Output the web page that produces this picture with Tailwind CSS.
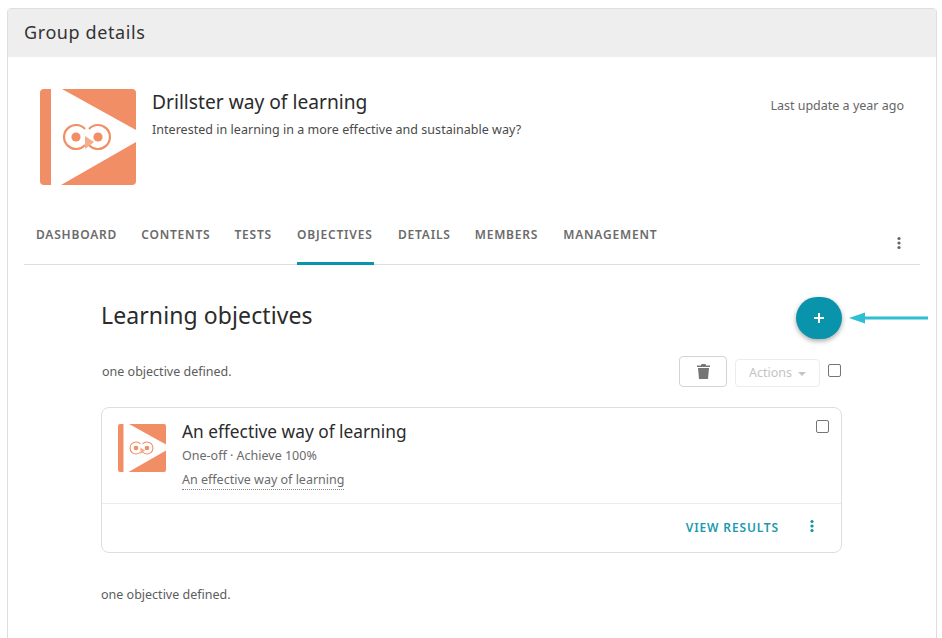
<!DOCTYPE html>
<html>
<head>
<meta charset="utf-8">
<title>Group details</title>
<script src="https://cdn.jsdelivr.net/npm/@tailwindcss/browser@4"></script>
</head>
<body class="bg-white font-['Noto_Sans',sans-serif] text-[#212121] overflow-hidden h-[638px]">
<svg class="hidden">
  <symbol id="logo" viewBox="0 0 96 96">
    <rect width="96" height="96" rx="4" fill="#f28e66"/>
    <path d="M11 0H22L96 41V53L21 96H11Z" fill="#fff"/>
    <path d="M45 40A12 12 0 1 0 45 56" fill="none" stroke="#f28e66" stroke-width="2.2"/>
    <path d="M49 40A12 12 0 1 1 49 56" fill="none" stroke="#f28e66" stroke-width="2.2"/>
    <circle cx="36" cy="48" r="4.6" fill="#f28e66"/>
    <circle cx="58" cy="48" r="4.6" fill="#f28e66"/>
    <path d="M45 47L54 53L45 60Z" fill="#f6ab8c"/>
  </symbol>
</svg>

<div class="relative ml-[7px] mr-[5px] mt-2 h-[700px] rounded-t-[4px] border border-[#dedede]">
  <div class="h-[48px] bg-[#eeeeee] pl-4 pt-[10px] text-[18px] leading-[27px] tracking-[0.6px] text-[#333]">Group details</div>

  <div class="flex pl-8 pr-8 pt-8">
    <svg class="h-24 w-24 shrink-0"><use href="#logo"/></svg>
    <div class="ml-4 flex-1">
      <div class="text-[19.2px] leading-7 -mt-[1px] text-[#2b2b2b]">Drillster way of learning</div>
      <div class="mt-1 text-[12.5px] leading-5 tracking-[0.03px] text-[#4a4a4a]">Interested in learning in a more effective and sustainable way?</div>
    </div>
    <div class="mt-[7px] text-[12.5px] leading-5 text-[#666]">Last update a year ago</div>
  </div>

  <div class="mx-4 mt-[19px] flex h-[61px] items-stretch border-b border-[#dedede] pl-3 text-[12px] font-semibold tracking-[0.8px] text-[#6b6b6b]">
    <a class="pt-[21px] leading-5">DASHBOARD</a>
    <a class="ml-6 pt-[21px] leading-5">CONTENTS</a>
    <a class="ml-6 pt-[21px] leading-5">TESTS</a>
    <a class="ml-[25px] -mb-px w-[77px] border-b-[3px] border-[#0a94ab] pt-[21px] leading-5">OBJECTIVES</a>
    <a class="ml-6 pt-[21px] leading-5">DETAILS</a>
    <a class="ml-6 pt-[21px] leading-5">MEMBERS</a>
    <a class="ml-[25px] pt-[21px] leading-5">MANAGEMENT</a>
    <svg class="ml-auto mr-[19px] mt-[32px] h-[14px] w-[4px]" viewBox="0 0 4 14" fill="#666"><circle cx="2" cy="2.5" r="1.6"/><circle cx="2" cy="7" r="1.6"/><circle cx="2" cy="11.5" r="1.6"/></svg>
  </div>

  <div class="ml-[93px] w-[741px]">
    <div class="mt-8 flex h-[42px] items-center justify-between">
      <h1 class="-mt-[7px] text-[23px] leading-9 tracking-[0.1px] text-[#2b2b2b]">Learning objectives</h1>
      <button class="flex h-[42px] w-[46px] items-center justify-center rounded-full bg-[#0a94ab] shadow-[0_2px_5px_rgba(0,0,0,0.35)]">
        <svg class="h-[12px] w-[12px]" viewBox="0 0 12 12" fill="none" stroke="#fff" stroke-width="2"><path d="M6 1V11M1 6H11"/></svg>
      </button>
    </div>

    <div class="mt-[17px] flex h-[31px] items-center pl-px">
      <span class="mt-[2px] text-[12.5px] text-[#5c5c5c]">one objective defined.</span>
      <button class="ml-auto flex h-[31px] w-12 items-center justify-center rounded-[4px] border border-[#d4d4d4]">
        <svg class="h-[15px] w-[13px]" viewBox="0 0 13 15" fill="#757575"><path d="M4.5 0H8.5L9 1.5H13V3H0V1.5H4ZM1 4H12L11 15H2Z"/></svg>
      </button>
      <div class="ml-2 mt-[3px] flex h-[28px] w-[85px] items-center justify-center gap-[6px] rounded-[4px] border border-[#ececec] text-[12.5px] text-[#c4c4c4]">
        Actions
        <span class="mt-px h-0 w-0 border-x-[4px] border-t-[4px] border-x-transparent border-t-[#c4c4c4]"></span>
      </div>
      <span class="ml-2 mr-px mt-[-3px] h-[13px] w-[13px] rounded-[2px] border border-[#757575]"></span>
    </div>

    <div class="mt-5 h-[146px] rounded-[8px] border border-[#dedede]">
      <div class="relative flex h-[96px] border-b border-[#ececec] pl-4 pt-4">
        <svg class="h-12 w-12 shrink-0"><use href="#logo"/></svg>
        <div class="ml-4">
          <div class="-mt-[2px] text-[17.3px] leading-[20px] text-[#2b2b2b]">An effective way of learning</div>
          <div class="mt-1 text-[12.5px] leading-5 text-[#6b6b6b]">One-off · Achieve 100%</div>
          <div class="mt-1 inline-block border-b border-dotted border-[#888] text-[12.5px] leading-[18px] text-[#6b6b6b]">An effective way of learning</div>
        </div>
        <span class="absolute right-3 top-3 h-[13px] w-[13px] rounded-[2px] border border-[#757575]"></span>
      </div>
      <div class="flex h-[49px] items-center justify-end pr-[27px]">
        <a class="-mt-[2px] text-[12px] font-semibold tracking-[0.85px] text-[#1a9ab0]">VIEW RESULTS</a>
        <svg class="ml-[31px] -mt-[5px] h-[14px] w-[4px]" viewBox="0 0 4 14" fill="#0a94ab"><circle cx="2" cy="2.5" r="1.6"/><circle cx="2" cy="7" r="1.6"/><circle cx="2" cy="11.5" r="1.6"/></svg>
      </div>
    </div>

    <div class="mt-[32px] text-[12.5px] leading-5 text-[#5c5c5c]">one objective defined.</div>
  </div>

  <svg class="absolute left-[840px] top-[301px] h-[16px] w-[80px]" viewBox="0 0 80 16" fill="#2fbfd3"><path d="M1 8L17 2.5V6.5H80V9.5H17V13.5Z"/></svg>
</div>
</body>
</html>
